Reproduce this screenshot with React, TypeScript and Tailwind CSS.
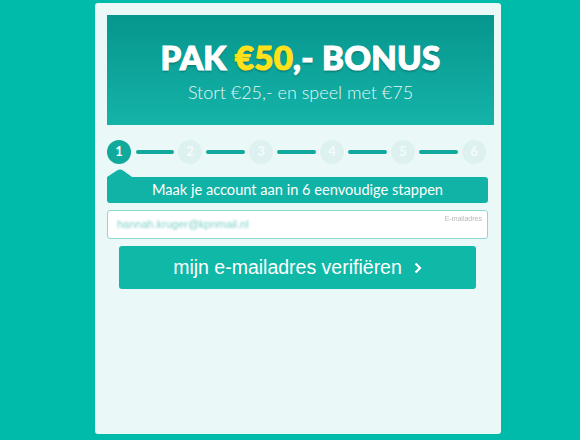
const steps = [1, 2, 3, 4, 5, 6]

function StepCircle({ n, active }: { n: number; active: boolean }) {
  return (
    <div className={`flex h-[24px] w-[24px] shrink-0 items-center justify-center rounded-full text-[13px] font-bold ${active ? 'bg-[#10a99c] text-white' : 'bg-[#ddf1f0] text-[#f4fbfb]'}`}>
      {n}
    </div>
  )
}

export default function App() {
  return (
    <div className="h-[440px] w-[580px] overflow-hidden bg-[#00bba9] pl-[95px] pt-[3px]" style={{ fontFamily: 'Lato, "Noto Sans", sans-serif' }}>
      <div className="h-[431px] w-[406px] rounded-[3px] bg-[#ebf8f8] pl-[12px] pt-[12px]">
        <div className="flex h-[110px] w-[387px] flex-col items-center bg-gradient-to-b from-[#06968e] to-[#14b3a8] pt-[22px]">
          <div className="text-[33px] font-black leading-[40px] tracking-[0.3px] text-white [-webkit-text-stroke:1.2px] [text-shadow:0_2px_2px_rgba(0,0,0,0.25)]">
            PAK <span className="text-[#ffe11a]">€50</span>,- BONUS
          </div>
          <div className="mt-[3px] text-[18px] font-light leading-[24px] text-[#e3f6f4]">Stort €25,- en speel met €75</div>
        </div>

        <div className="mt-[15px] flex w-[379px] items-center">
          {steps.map((n, i) => (
            <div key={n} className={`flex items-center ${i === 0 ? '' : 'flex-1'}`}>
              {i > 0 && <div className={`mx-[4px] h-[4px] flex-1 rounded-full bg-[#10a99c] ${i === 1 ? 'ml-[5px]' : ''}`} />}
              <StepCircle n={n} active={i === 0} />
            </div>
          ))}
        </div>

        <div className="relative mt-[13px] flex h-[26px] w-[381px] items-center justify-center rounded-[3px] bg-[#10b3a5] text-[14.6px] text-white">
          <svg className="absolute left-0 top-[-8px]" width="30" height="10" viewBox="0 0 30 10">
            <path d="M0 10 L0 8 L10 1.5 Q13 -0.5 16 1.5 L28 10 Z" fill="#10b3a5" />
          </svg>
          Maak je account aan in 6 eenvoudige stappen
        </div>

        <div className="relative mt-[7px] flex h-[29px] w-[381px] items-center rounded-[3px] border border-[#8fd8d1] bg-white pl-[9px]">
          <span className="text-[11px] text-[#7fd2ca] blur-[1px]" style={{ fontFamily: '"Liberation Sans", Arial, sans-serif' }}>hannah.kruger@kpnmail.nl</span>
          <span className="absolute right-[5px] top-[3px] text-[7px] text-[#b8b8b8] blur-[0.5px]" style={{ fontFamily: '"Liberation Sans", Arial, sans-serif' }}>E-mailadres</span>
        </div>

        <div className="ml-[12px] mt-[7px] flex h-[43px] w-[357px] items-center justify-center rounded-[3px] bg-[#10b8a8] text-[19.5px] text-white" style={{ fontFamily: '"Liberation Sans", Arial, sans-serif' }}>
          <span>mijn e-mailadres verifiëren</span>
          <svg className="ml-[12px]" width="8" height="12" viewBox="0 0 8 12">
            <path d="M1.5 1.5 L6 6 L1.5 10.5" stroke="white" strokeWidth="2.2" fill="none" />
          </svg>
        </div>
      </div>
    </div>
  )
}
